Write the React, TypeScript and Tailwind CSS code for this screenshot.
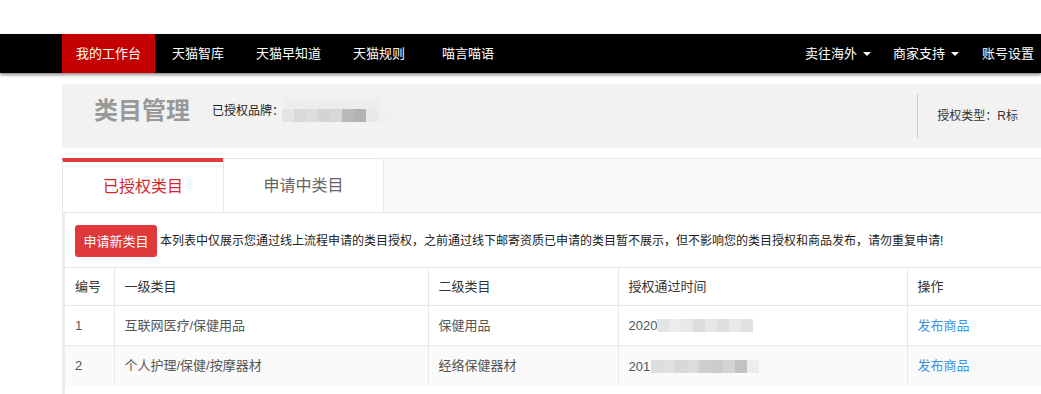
import React from 'react'

const navLeft = [
  { label: '我的工作台', active: true, ml: 'ml-0' },
  { label: '天猫智库', ml: 'ml-[3px]' },
  { label: '天猫早知道', ml: 'ml-[4px]' },
  { label: '天猫规则', ml: 'ml-[4px]' },
  { label: '喵言喵语', ml: 'ml-[9px]' },
]

const rows = [
  { no: '1', first: '互联网医疗/保健用品', second: '保健用品', time: '2020', blur: ['#e4e4e4', '#ececec', '#e8e8e8', '#dcdcdc', '#e6e6e6', '#dedede', '#e9e9e9', '#e2e2e2'] },
  { no: '2', first: '个人护理/保健/按摩器材', second: '经络保健器材', time: '201', blur: ['#dddddd', '#e0e0e0', '#d8d8d8', '#dcdcdc', '#cfcfcf', '#cbcbcb', '#d3d3d3', '#c2c2c2', '#ededed'] },
]

function Caret() {
  return <span className="ml-[6px] inline-block w-0 h-0 border-l-[4px] border-r-[4px] border-t-[4px] border-l-transparent border-r-transparent border-t-white" />
}

function Mosaic({ colors, className }: { colors: string[]; className?: string }) {
  return (
    <span className={`inline-flex align-middle ${className || ''}`}>
      {colors.map((c, i) => (
        <span key={i} className="w-[12px] h-[13px] inline-block" style={{ background: c }} />
      ))}
    </span>
  )
}

export default function App() {
  return (
    <div className="w-[1041px] h-[394px] overflow-hidden bg-white font-['Liberation_Sans','Noto_Sans_CJK_SC',sans-serif] text-[#333]">
      <div className="pt-[34px]">
        {/* top nav */}
        <div className="h-[39px] bg-black flex items-stretch shadow-[0_2px_3px_rgba(0,0,0,0.45)] relative z-10">
          <div className="flex items-stretch pl-[62px]">
            {navLeft.map((n) => (
              <div
                key={n.label}
                className={`${n.ml} px-[14px] flex items-center text-[13px] leading-none text-white ${n.active ? 'bg-[#c40000]' : ''}`}
              >
                {n.label}
              </div>
            ))}
          </div>
          <div className="ml-auto flex items-center text-[13px] leading-none text-white pr-[7px]">
            <span className="flex items-center">卖往海外<Caret /></span>
            <span className="flex items-center ml-[22px]">商家支持<Caret /></span>
            <span className="ml-[23px]">账号设置</span>
          </div>
        </div>

        <div className="ml-[62px] w-[1000px]">
          {/* header panel */}
          <div className="mt-[11px] h-[64px] bg-[#f2f2f2] flex items-start">
            <div className="pl-[32px] pt-[11px] flex items-center h-[43px]">
              <span className="text-[24px] leading-[32px] font-bold text-[#999]">类目管理</span>
              <span className="ml-[22px] text-[12px] text-[#222]">已授权品牌：</span>
              <span className="relative ml-[-4px] w-[106px] h-[24px] inline-block">
                <span className="absolute left-[4px] top-[0px] w-[96px] h-[12px] bg-[#ececec] rounded-full blur-[2px]" />
                <Mosaic className="absolute left-[2px] top-[10px]" colors={['#e4e4e4', '#d9d9d9', '#dddddd', '#d4d4d4', '#d8d8d8', '#b9b9b9', '#b2b2b2', '#e8e8e8', '#f0f0f0']} />
              </span>
            </div>
            <div className="ml-auto mr-[44px] mt-[10px] h-[44px] border-l border-[#ccc] pl-[19px] flex items-center text-[12px] text-[#333]">
              授权类型：R标
            </div>
          </div>

          {/* tabs */}
          <div className="mt-[10px] h-[55px] flex bg-[#f8f8f8] border-t border-b border-[#e8e8e8]">
            <div className="w-[161px] bg-white border-l border-[#e4e4e4] border-t-[4px] border-t-[#e23c3c] -mt-px flex items-center justify-center text-[16px] text-[#d9262c]">
              已授权类目
            </div>
            <div className="w-[161px] bg-white border-l border-r border-[#e8e8e8] flex items-center justify-center text-[16px] text-[#666]">
              申请中类目
            </div>
          </div>

          {/* content */}
          <div className="border-l-[3px] border-[#ececec] h-[181px]">
            <div className="pt-[12px] pl-[10px] flex items-center">
              <button className="h-[32px] w-[82px] bg-[#e0393b] rounded-[3px] text-white text-[13px] leading-none">
                申请新类目
              </button>
              <span className="ml-[3px] text-[12px] text-[#222] whitespace-nowrap">
                本列表中仅展示您通过线上流程申请的类目授权，之前通过线下邮寄资质已申请的类目暂不展示，但不影响您的类目授权和商品发布，请勿重复申请!
              </span>
            </div>

            <table className="mt-[10px] table-fixed border-collapse text-[13px] w-[997px]">
              <colgroup>
                <col className="w-[49px]" />
                <col className="w-[314px]" />
                <col className="w-[190px]" />
                <col className="w-[289px]" />
                <col className="w-[155px]" />
              </colgroup>
              <thead>
                <tr className="h-[38px] border-t border-b border-[#e8e8e8] text-[#333]">
                  <th className="font-normal text-left pl-[10px]">编号</th>
                  <th className="font-normal text-left pl-[10px] border-l border-[#e8e8e8]">一级类目</th>
                  <th className="font-normal text-left pl-[10px] border-l border-[#e8e8e8]">二级类目</th>
                  <th className="font-normal text-left pl-[10px] border-l border-[#e8e8e8]">授权通过时间</th>
                  <th className="font-normal text-left pl-[10px] border-l border-[#e8e8e8]">操作</th>
                </tr>
              </thead>
              <tbody>
                {rows.map((r, i) => (
                  <tr key={r.no} className={`h-[40px] text-[#555] ${i === 0 ? 'bg-white border-b border-[#e8e8e8]' : 'bg-[#fafafa]'}`}>
                    <td className="pl-[10px]">{r.no}</td>
                    <td className="pl-[10px] border-l border-[#e8e8e8]">{r.first}</td>
                    <td className="pl-[10px] border-l border-[#e8e8e8]">{r.second}</td>
                    <td className="pl-[10px] border-l border-[#e8e8e8]">
                      <span className="align-middle">{r.time}</span>
                      <Mosaic className={i === 0 ? 'ml-0 blur-[0.5px]' : 'ml-[1px]'} colors={r.blur} />
                    </td>
                    <td className="pl-[10px] border-l border-[#e8e8e8] text-[#3a93e6]">发布商品</td>
                  </tr>
                ))}
              </tbody>
            </table>
          </div>
        </div>
      </div>
    </div>
  )
}
